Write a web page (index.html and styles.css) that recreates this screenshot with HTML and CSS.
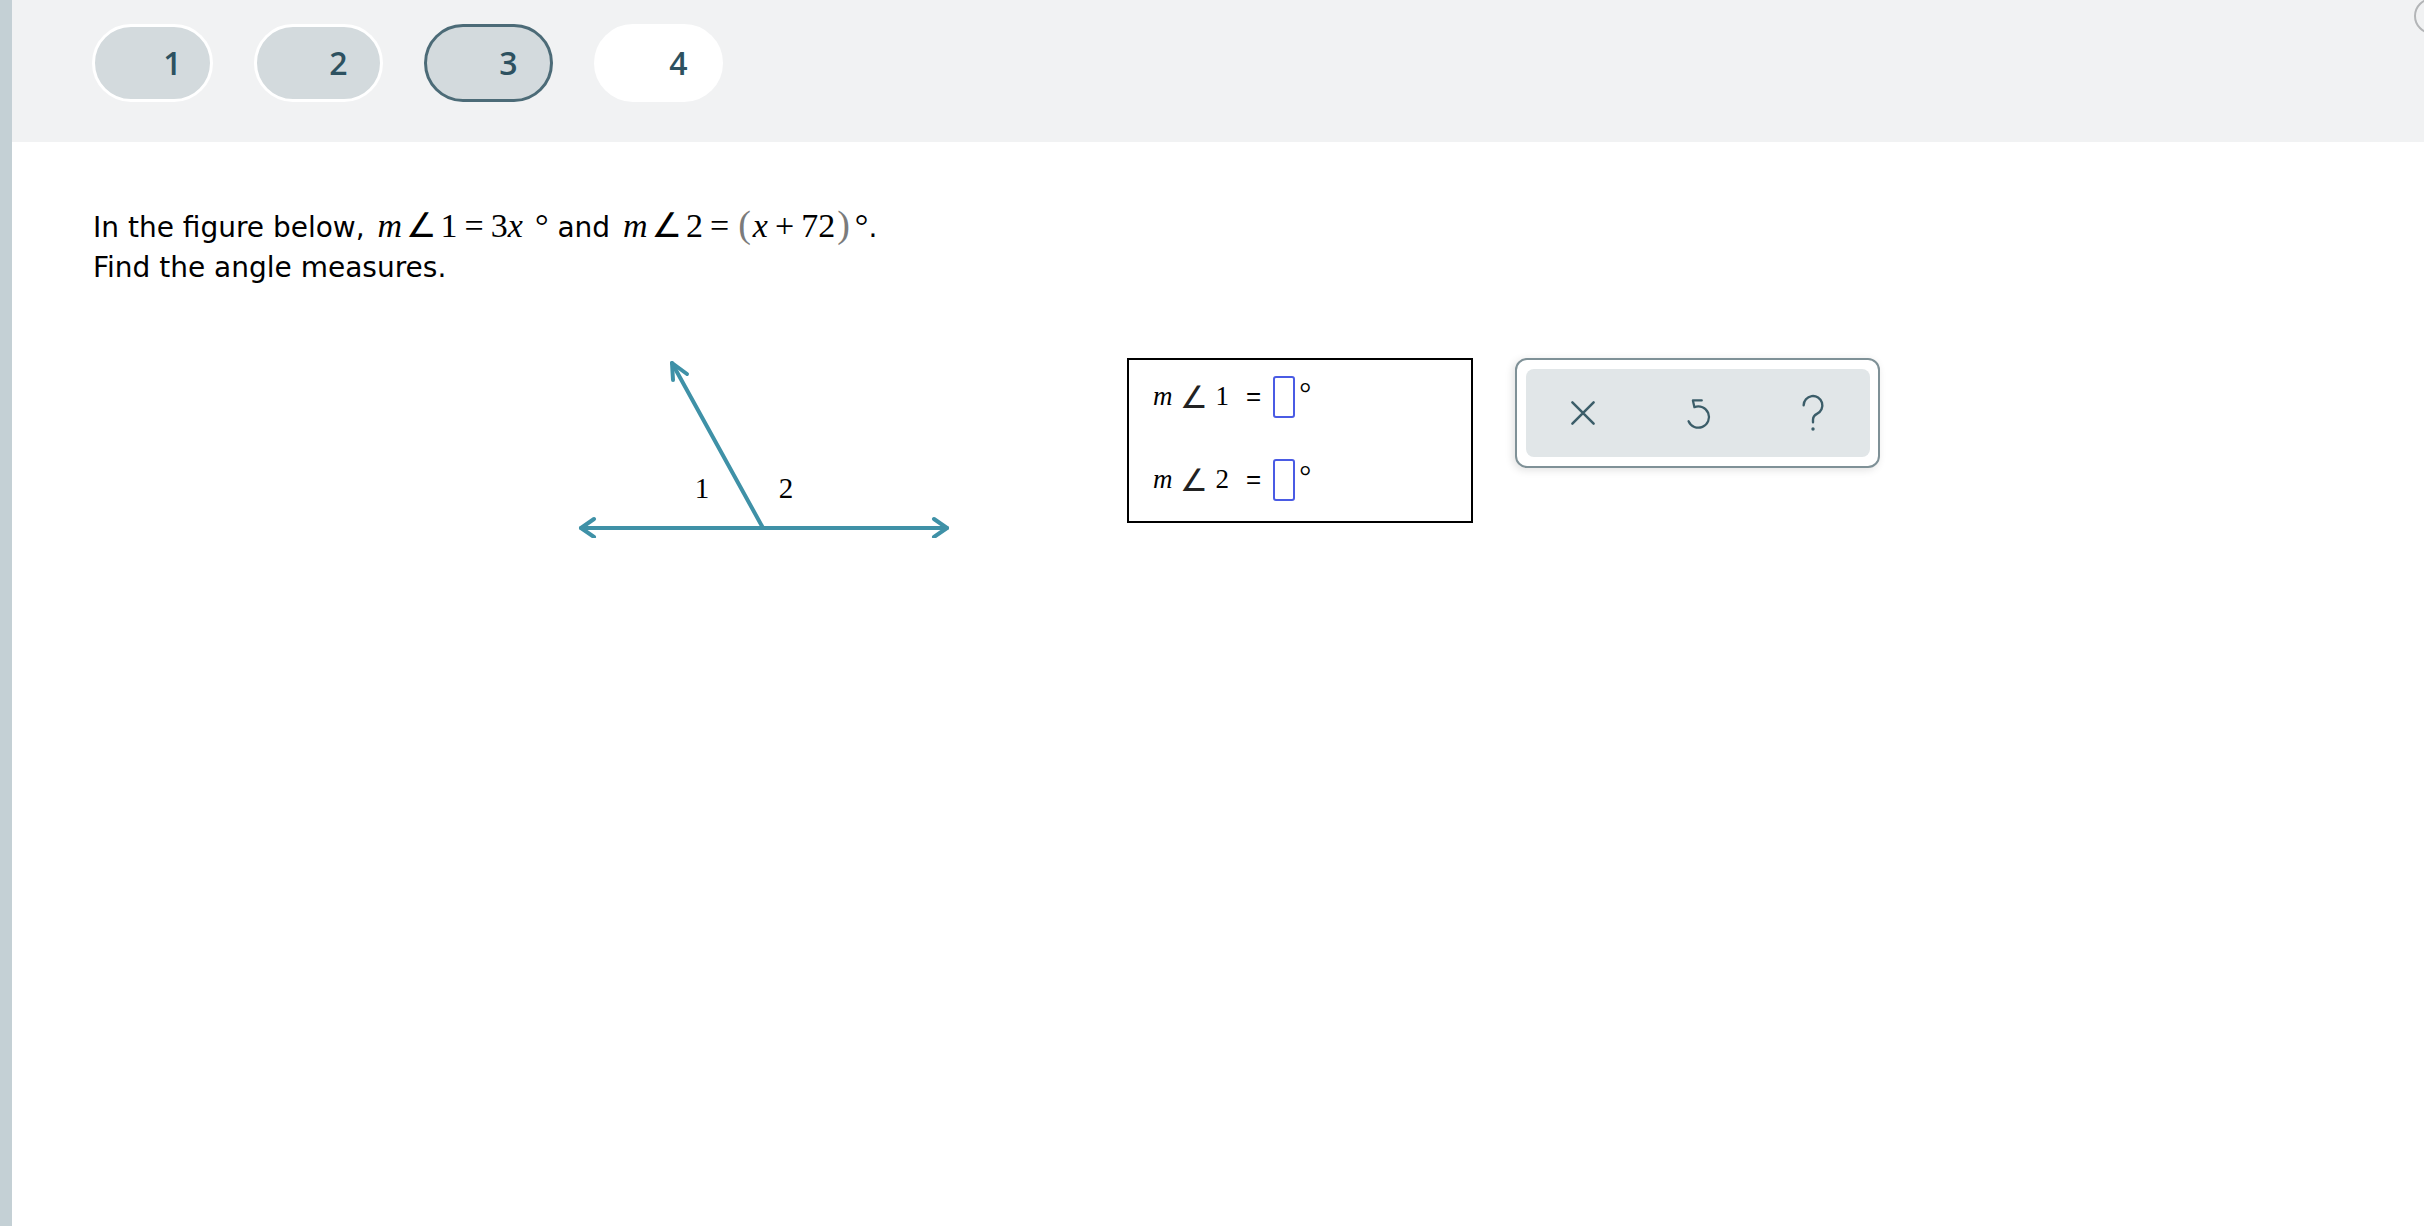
FILE: index.html
```html
<!DOCTYPE html>
<html lang="en">
<head>
<meta charset="utf-8">
<title>Angle measures</title>
<link rel="stylesheet" href="styles.css">
</head>
<body>
<div class="app">
  <aside class="rail"></aside>
  <main class="main">
    <header class="topbar">
      <nav class="steps">
        <button class="step step-done">1</button>
        <button class="step step-done step-wide">2</button>
        <button class="step step-current step-wide">3</button>
        <button class="step step-open step-wide">4</button>
      </nav>
      <span class="corner-ring"></span>
    </header>
    <section class="question">
      <p class="prompt">In the figure below, <span class="math"><i>m</i><span class="ang">∠</span>1<span class="op">=</span>3<i>x</i><span class="deg-s">°</span></span> and <span class="math"><i>m</i><span class="ang">∠</span>2<span class="op">=</span><span class="paren">(</span><i>x</i><span class="op">+</span>72<span class="paren">)</span><span class="deg-p">°</span></span>.<br>Find the angle measures.</p>
      <div class="work">
        <svg class="figure" width="390" height="180" viewBox="0 0 390 180">
          <g fill="none" stroke="#3f91a7" stroke-width="4" stroke-linecap="round" stroke-linejoin="round">
            <path d="M11 170 H377"/>
            <path d="M24 161 L11 170 L24 179"/>
            <path d="M364 161 L377 170 L364 179"/>
            <path d="M193 170 L102 5"/>
            <path d="M117 16 L102 5 L103 22"/>
          </g>
          <text class="fig-label" x="132" y="140" text-anchor="middle">1</text>
          <text class="fig-label" x="216" y="140" text-anchor="middle">2</text>
        </svg>
        <div class="answer">
          <div class="answer-row">
            <i class="a-var">m</i><span class="a-ang">∠</span><span class="a-num">1</span><span class="a-eq">=</span><span class="blank"></span><span class="a-deg">°</span>
          </div>
          <div class="answer-row">
            <i class="a-var">m</i><span class="a-ang">∠</span><span class="a-num">2</span><span class="a-eq">=</span><span class="blank"></span><span class="a-deg">°</span>
          </div>
        </div>
        <div class="tools">
          <div class="tools-inner">
            <button class="tool" aria-label="Clear">
              <svg width="30" height="30" viewBox="0 0 24 24"><path d="M3.5 3.5 L20.5 20.5 M20.5 3.5 L3.5 20.5" fill="none" stroke="#3b5d69" stroke-width="2" stroke-linecap="round"/></svg>
            </button>
            <button class="tool" aria-label="Undo">
              <svg width="36" height="36" viewBox="0 0 24 24"><path d="M14.5 3.6 H8.6 L9.6 8.1 M9.6 8.1 A7.1 7.1 0 1 1 5.7 17.5" fill="none" stroke="#3b5d69" stroke-width="1.5" stroke-linecap="round" stroke-linejoin="round"/></svg>
            </button>
            <button class="tool" aria-label="Help">
              <svg width="34" height="42" viewBox="0 0 20 24"><path d="M4.5 7.5 A5.5 5.5 0 1 1 12.3 12.5 C10.6 13.4 10 14.4 10 16 V17.5" fill="none" stroke="#3b5d69" stroke-width="1.4" stroke-linecap="round"/><circle cx="10" cy="21.4" r="1" fill="#3b5d69"/></svg>
            </button>
          </div>
        </div>
      </div>
    </section>
  </main>
</div>
</body>
</html>
```

FILE: styles.css
```css
* { box-sizing: border-box; }

html, body {
  margin: 0;
  padding: 0;
  background: #ffffff;
}

.app {
  display: flex;
  min-height: 1226px;
}

.rail {
  width: 12px;
  flex: none;
  background: #c4d0d5;
}

.main {
  flex: 1;
  position: relative;
  overflow: hidden;
}

.topbar {
  height: 142px;
  background: #f1f2f3;
  padding: 24px 0 0 80px;
}

.steps {
  display: flex;
  gap: 41px;
}

.step {
  width: 121px;
  height: 78px;
  border-radius: 39px;
  border: 3px solid #ffffff;
  background: #d3dadd;
  color: #2d5160;
  font-family: "Open Sans", Lato, sans-serif;
  font-size: 32px;
  font-weight: 600;
  padding: 0 0 2px 40px;
  display: flex;
  align-items: center;
  justify-content: center;
  margin: 0;
}

.step-wide { width: 129px; }

.step-current {
  border-color: #4c6b77;
}

.step-open {
  background: #ffffff;
  border-color: #ffffff;
}

.corner-ring {
  position: absolute;
  top: -2px;
  left: 2402px;
  width: 36px;
  height: 36px;
  border-radius: 50%;
  border: 2px solid #b3b5b7;
}

.question {
  padding: 0 0 0 81px;
}

.prompt {
  margin: 62px 0 0;
  font-family: "DejaVu Sans", Verdana, sans-serif;
  font-size: 28px;
  line-height: 40px;
  color: #000000;
}

.math {
  font-family: "Liberation Serif", "Times New Roman", serif;
  font-size: 34px;
  line-height: 40px;
  margin-left: 4px;
}

.math i { font-style: italic; }

.ang {
  font-family: "DejaVu Sans", sans-serif;
  font-size: 34px;
  line-height: 40px;
  margin: 0 4px 0 4px;
}

.op { margin: 0 7px; }

.deg-s { margin-left: 12px; }

.deg-p { margin-left: 3px; }

.paren {
  color: #7b7b7b;
  font-size: 38px;
  line-height: 40px;
  margin: 0 2px;
}

.work {
  display: flex;
  align-items: flex-start;
  margin-top: 70px;
}

.figure {
  display: block;
  flex: none;
  margin-left: 477px;
}

.fig-label {
  font-family: "Liberation Serif", "Times New Roman", serif;
  font-size: 29px;
  fill: #000000;
}

.answer {
  flex: none;
  width: 346px;
  height: 165px;
  margin: 0 0 0 167px;
  border: 2px solid #000000;
  padding: 16px 0 0 24px;
  display: flex;
  flex-direction: column;
  gap: 42px;
}

.answer-row {
  height: 41px;
  display: flex;
  align-items: center;
  font-family: "Liberation Serif", "Times New Roman", serif;
  font-size: 27px;
  color: #000000;
}

.a-var { font-style: italic; }

.a-ang {
  font-family: "DejaVu Sans", sans-serif;
  font-weight: 200;
  font-size: 31px;
  margin-left: 7px;
  color: #222;
}

.a-num { margin-left: 8px; }

.a-eq {
  font-family: "Liberation Sans", Arial, sans-serif;
  font-size: 26px;
  margin-left: 17px;
}

.blank {
  width: 22px;
  height: 42px;
  margin-left: 12px;
  border: 2px solid #4a5be4;
  border-radius: 3px;
  background: #ffffff;
}

.a-deg {
  align-self: flex-start;
  font-family: "Liberation Serif", "Times New Roman", serif;
  font-size: 30px;
  line-height: 30px;
  margin: 2px 0 0 4px;
}

.tools {
  flex: none;
  width: 365px;
  height: 110px;
  margin: 0 0 0 42px;
  border: 2px solid #7f9197;
  border-radius: 12px;
  background: #ffffff;
  padding: 9px 8px 9px 9px;
  box-shadow: -2px 2px 8px rgba(0, 0, 0, 0.12);
}

.tools-inner {
  height: 100%;
  background: #e1e6e8;
  border-radius: 8px;
  display: grid;
  grid-template-columns: repeat(3, 1fr);
  align-items: center;
}

.tool {
  background: none;
  border: 0;
  padding: 0;
  margin: 0;
  display: flex;
  justify-content: center;
  align-items: center;
  cursor: pointer;
}

.tool svg { display: block; }
```
